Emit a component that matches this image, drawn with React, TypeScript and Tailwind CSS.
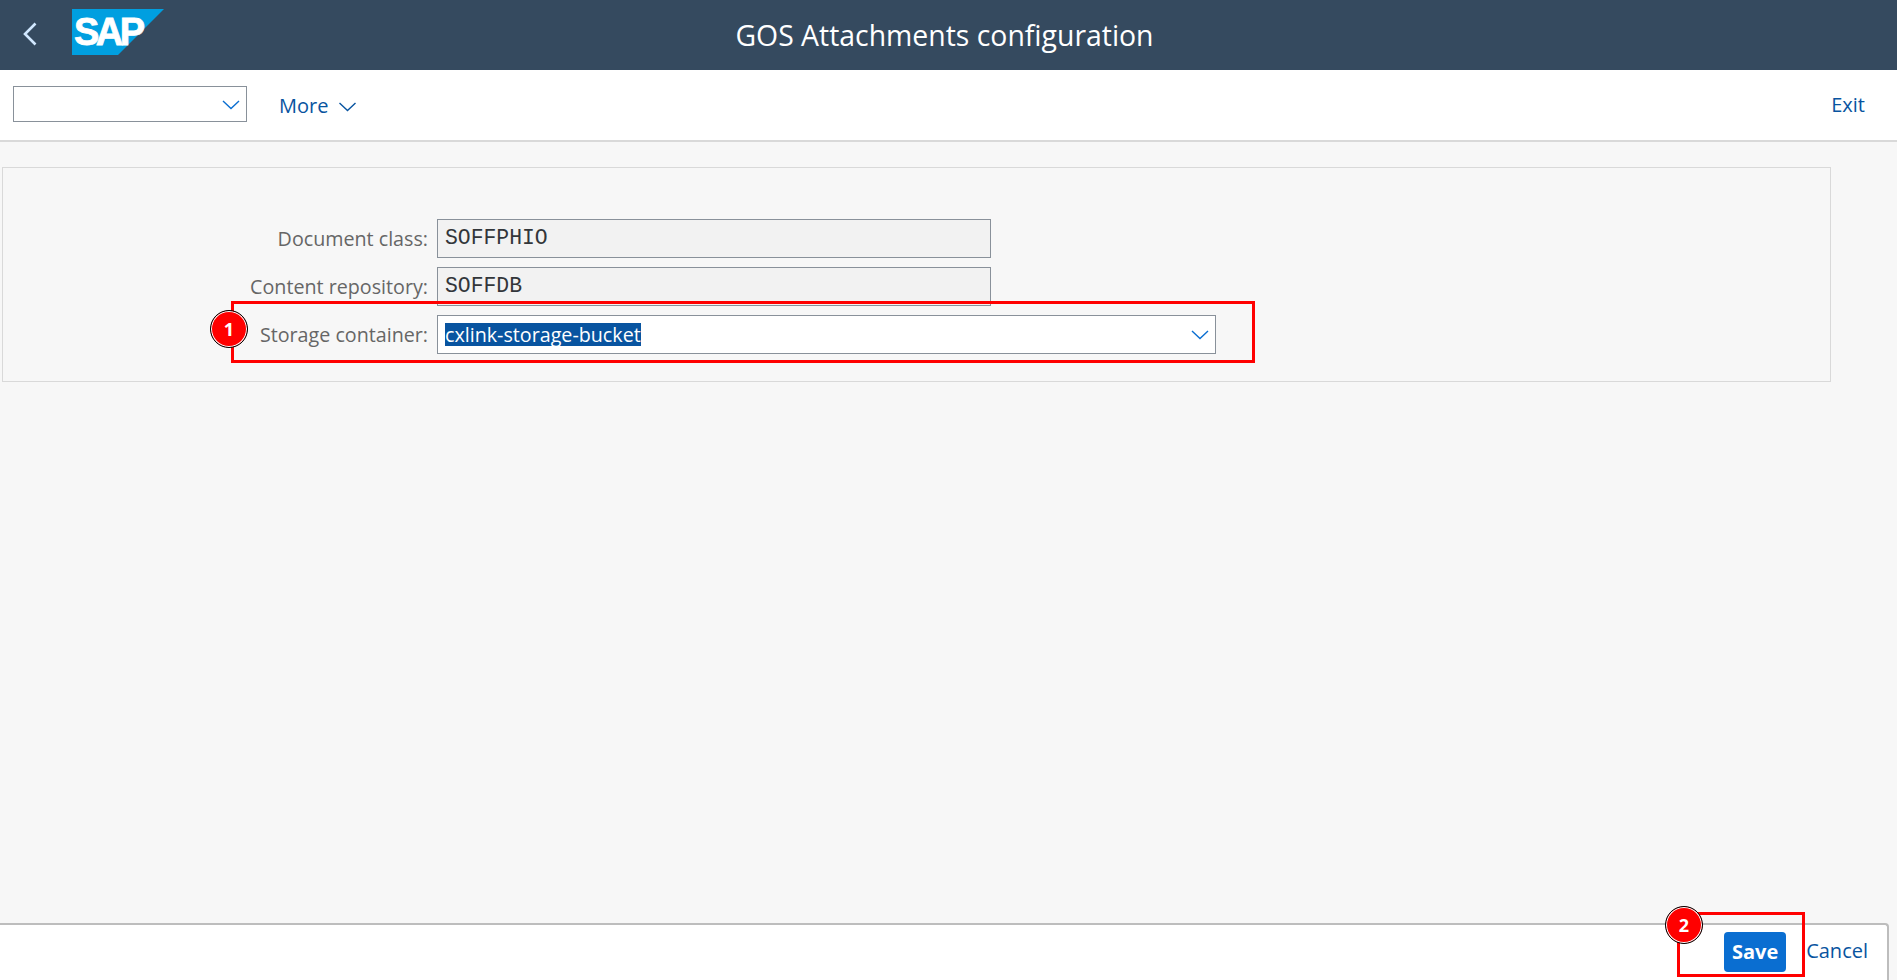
// SAP GUI for HTML: GOS Attachments configuration, with red callouts on top

const SANS = 'font-["Open_Sans","Noto_Sans",sans-serif]';

function Chevron({ className }: { className: string }) {
  return (
    <svg viewBox="0 0 18 10" fill="none" className={className}>
      <path d="M1 1l8 7.5L17 1" stroke="currentColor" strokeWidth="1.4" />
    </svg>
  );
}

function SapLogo() {
  return (
    <svg viewBox="0 0 92 46" className="mb-[6px] h-[46px] w-[92px]">
      <polygon points="0,0 92,0 46,46 0,46" fill="#009fe0" />
      <text
        x="2"
        y="36"
        fill="#fff"
        stroke="#fff"
        strokeWidth="0.8"
        fontFamily="Liberation Sans, sans-serif"
        fontWeight="700"
        fontSize="38"
        letterSpacing="-3.5"
      >
        SAP
      </text>
    </svg>
  );
}

function FormRow({ label, children }: { label: string; children: React.ReactNode }) {
  return (
    <div className="flex h-[39px] items-center">
      <label className="w-[434px] pr-[9px] text-right text-[19.7px] text-[#666]">{label}</label>
      {children}
    </div>
  );
}

function ReadOnlyField({ value }: { value: string }) {
  return (
    <div className='flex h-[39px] w-[554px] items-center border border-[#89919a] bg-[#f2f2f2] pl-[7px] font-["Liberation_Mono",monospace] text-[21.4px] text-[#32363a]'>
      {value}
    </div>
  );
}

function Callout({ n, className }: { n: number; className: string }) {
  return (
    <div
      className={`absolute flex h-[38px] w-[38px] items-center justify-center rounded-full border border-black bg-[#f00] text-[18px] font-bold text-white shadow-[inset_0_0_0_1px_#fff] ${className}`}
    >
      {n}
    </div>
  );
}

export default function App() {
  return (
    <div className={`relative flex h-[980px] w-[1897px] flex-col overflow-hidden bg-[#f7f7f7] ${SANS}`}>
      {/* header */}
      <header className="relative flex h-[70px] shrink-0 items-center justify-center bg-[#354a5f] pr-[8px]">
        <div className="absolute left-[23px] top-0 flex h-[70px] items-center gap-[35px]">
          <svg viewBox="0 0 14 24" fill="none" className="mt-[-2px] h-[24px] w-[14px] text-[#d1e8ff]">
            <path d="M12.5 1.5L2 12l10.5 10.5" stroke="currentColor" strokeWidth="2.6" />
          </svg>
          <SapLogo />
        </div>
        <h1 className="text-[28.4px] leading-none text-white">GOS Attachments configuration</h1>
      </header>

      {/* toolbar */}
      <div className="flex h-[72px] shrink-0 items-center border-b-2 border-[#d9d9d9] bg-white pl-[13px] pr-[32px]">
        <div className="mb-[2px] flex h-[36px] w-[234px] items-center justify-end border border-[#89919a] bg-white pr-[6px] text-[#0a6ed1]">
          <Chevron className="mt-[1px] h-[10px] w-[18px]" />
        </div>
        <button className="ml-[32px] mt-[1px] flex items-center gap-[10px] text-[20px] text-[#0854a0]">
          More
          <Chevron className="mt-[2px] h-[10px] w-[19px]" />
        </button>
        <button className="ml-auto text-[20px] text-[#0854a0]">Exit</button>
      </div>

      {/* form */}
      <main className="min-h-0 flex-1">
        <section className="ml-[2px] mt-[25px] flex h-[215px] w-[1829px] flex-col gap-[9px] border border-[#d9d9d9] pt-[51px]">
          <FormRow label="Document class:">
            <ReadOnlyField value="SOFFPHIO" />
          </FormRow>
          <FormRow label="Content repository:">
            <ReadOnlyField value="SOFFDB" />
          </FormRow>
          <FormRow label="Storage container:">
            <div className="flex h-[39px] w-[779px] items-center justify-between border border-[#89919a] bg-white pl-[7px] pr-[6px]">
              <span className="bg-[#0854a0] text-[19.7px] leading-[23px] text-white">cxlink-storage-bucket</span>
              <Chevron className="h-[10px] w-[18px] text-[#0a6ed1]" />
            </div>
          </FormRow>
        </section>
      </main>

      {/* footer */}
      <footer className="mr-[8px] flex h-[57px] shrink-0 items-center justify-end rounded-tr-[4px] border-r-2 border-t-2 border-[#bdbdbd] bg-white pb-[3px] pr-[19px]">
        <button className="mt-[2px] h-[40px] w-[62px] rounded-[4px] bg-[#0a6ed1] text-[20px] font-bold text-white">
          Save
        </button>
        <button className="ml-[20px] text-[20px] text-[#0854a0]">Cancel</button>
      </footer>

      {/* red annotations */}
      <div className="absolute left-[231px] top-[301px] h-[62px] w-[1024px] border-[3px] border-[#f00]" />
      <div className="absolute left-[1677px] top-[912px] h-[65px] w-[128px] border-[3px] border-[#f00]" />
      <Callout n={1} className="left-[210px] top-[310px]" />
      <Callout n={2} className="left-[1665px] top-[906px]" />
    </div>
  );
}
